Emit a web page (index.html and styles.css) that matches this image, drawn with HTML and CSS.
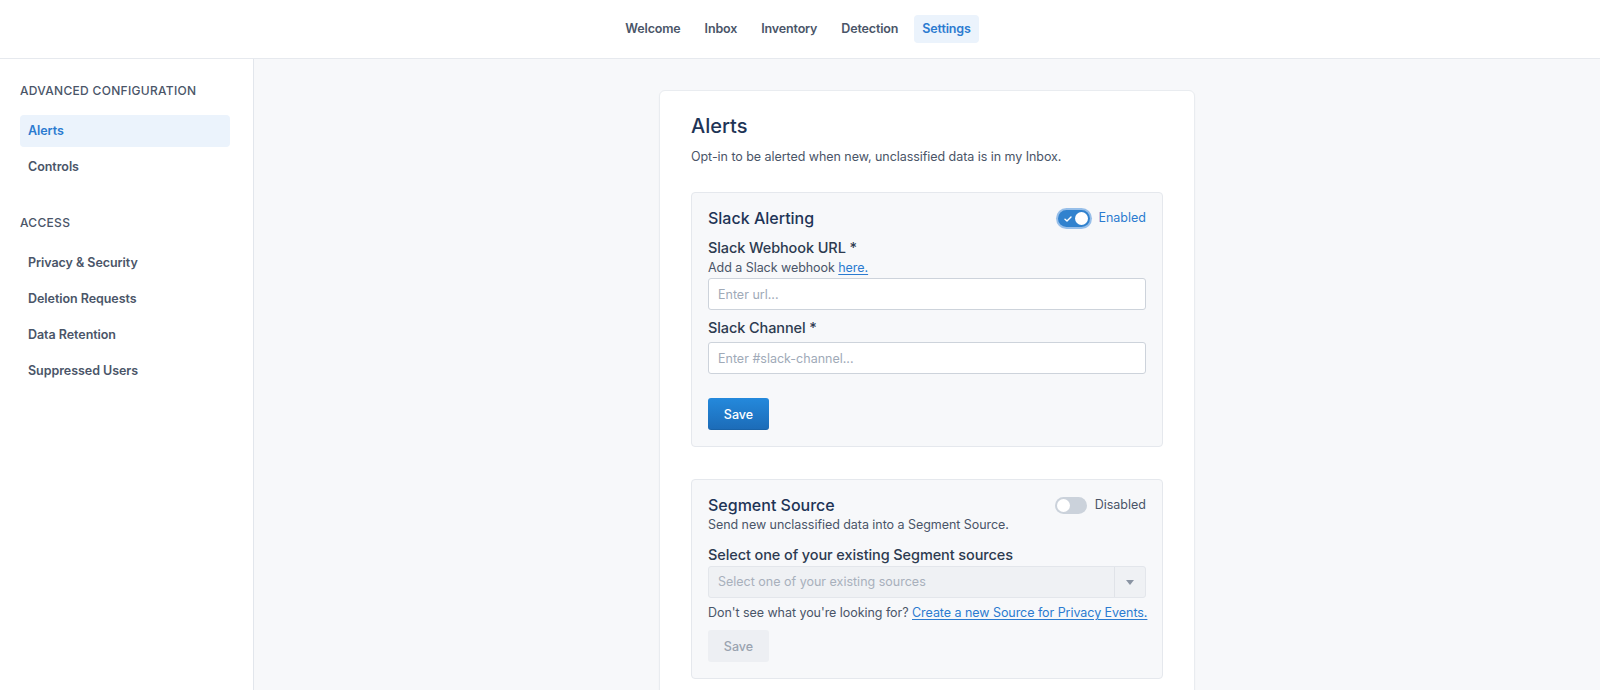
FILE: index.html
```html
<!DOCTYPE html>
<html lang="en">
<head>
<meta charset="utf-8">
<title>Settings - Alerts</title>
<link rel="stylesheet" href="styles.css">
</head>
<body>
<header class="topbar">
  <nav class="topnav">
    <a class="topnav-item">Welcome</a>
    <a class="topnav-item">Inbox</a>
    <a class="topnav-item">Inventory</a>
    <a class="topnav-item">Detection</a>
    <a class="topnav-item is-active">Settings</a>
  </nav>
</header>
<div class="layout">
  <aside class="sidebar">
    <div class="side-heading">Advanced Configuration</div>
    <a class="side-item is-active">Alerts</a>
    <a class="side-item">Controls</a>
    <div class="side-heading side-heading--gap">Access</div>
    <a class="side-item">Privacy &amp; Security</a>
    <a class="side-item">Deletion Requests</a>
    <a class="side-item">Data Retention</a>
    <a class="side-item">Suppressed Users</a>
  </aside>
  <main class="main">
    <section class="card">
      <h1 class="card-title">Alerts</h1>
      <p class="card-desc">Opt-in to be alerted when new, unclassified data is in my Inbox.</p>

      <div class="panel">
        <div class="panel-head">
          <h2 class="panel-title">Slack Alerting</h2>
          <div class="switch-wrap">
            <span class="switch is-on">
              <svg class="switch-check" width="8" height="6" viewBox="0 0 8 6"><path d="M1 3.2 L3 5 L7 1" fill="none" stroke="#fff" stroke-width="1.4" stroke-linecap="round" stroke-linejoin="round"/></svg>
              <span class="switch-knob"></span>
            </span>
            <span class="switch-label is-on">Enabled</span>
          </div>
        </div>
        <label class="field-label field-label--first">Slack Webhook URL *</label>
        <div class="field-help">Add a Slack webhook <a class="link">here.</a></div>
        <input class="input input--help" type="text" placeholder="Enter url...">
        <label class="field-label field-label--next">Slack Channel *</label>
        <input class="input" type="text" placeholder="Enter #slack-channel...">
        <button class="btn btn-primary">Save</button>
      </div>

      <div class="panel panel--second">
        <div class="panel-head">
          <h2 class="panel-title">Segment Source</h2>
          <div class="switch-wrap">
            <span class="switch">
              <span class="switch-knob"></span>
            </span>
            <span class="switch-label">Disabled</span>
          </div>
        </div>
        <div class="panel-desc">Send new unclassified data into a Segment Source.</div>
        <label class="field-label field-label--select">Select one of your existing Segment sources</label>
        <div class="select is-disabled">
          <span class="select-value">Select one of your existing sources</span>
          <span class="select-arrow">
            <svg width="8" height="5" viewBox="0 0 8 5"><path d="M0 0 L8 0 L4 5 Z" fill="#8a94a3"/></svg>
          </span>
        </div>
        <div class="field-help field-help--after">Don't see what you're looking for? <a class="link">Create a new Source for Privacy Events.</a></div>
        <button class="btn btn-disabled">Save</button>
      </div>
    </section>
  </main>
</div>
</body>
</html>
```
FILE: styles.css
```css
* { box-sizing: border-box; }

html, body {
  margin: 0;
  padding: 0;
  height: 100%;
}

body {
  font-family: Inter, "Noto Sans", "Liberation Sans", sans-serif;
  color: #4a5568;
  background: #f7f8fa;
  overflow: hidden;
}

a { cursor: pointer; }

.topbar {
  height: 59px;
  background: #fff;
  border-bottom: 1px solid #e6e9ee;
  display: flex;
  justify-content: center;
  align-items: center;
  padding-right: 4px;
}

.topnav {
  display: flex;
  gap: 8px;
  margin-top: -1px;
}

.topnav-item {
  display: block;
  height: 28px;
  line-height: 28px;
  padding: 0 8px;
  border-radius: 4px;
  font-size: 12.5px;
  font-weight: 600;
  color: #4a5568;
  letter-spacing: -0.15px;
}

.topnav-item.is-active {
  background: #ebf3fc;
  color: #2b7bd0;
}

.layout {
  display: flex;
  height: calc(100% - 59px);
}

.sidebar {
  width: 254px;
  flex: none;
  background: #fff;
  border-right: 1px solid #e2e6ec;
  padding: 24px 23px 0 20px;
  display: flex;
  flex-direction: column;
  gap: 4px;
}

.side-heading {
  font-size: 12px;
  line-height: 16px;
  font-weight: 500;
  letter-spacing: 0.3px;
  text-transform: uppercase;
  color: #4a5568;
  margin-bottom: 12px;
}

.side-heading--gap {
  margin-top: 28px;
}

.side-item {
  display: block;
  height: 32px;
  line-height: 32px;
  padding: 0 8px;
  border-radius: 4px;
  font-size: 12.5px;
  font-weight: 600;
  letter-spacing: -0.05px;
  color: #4a5568;
}

.side-item.is-active {
  background: #ebf3fc;
  color: #2b7bd0;
}

.main {
  flex: 1;
  display: flex;
  justify-content: center;
  padding-top: 31px;
  min-width: 0;
}

.card {
  width: 536px;
  background: #fff;
  border: 1px solid #e9ecf0;
  border-radius: 6px;
  padding: 21px 31px 40px;
  align-self: flex-start;
  box-shadow: 0 1px 2px rgba(20, 30, 50, 0.03);
}

.card-title {
  margin: 0 0 7px;
  font-size: 20px;
  line-height: 28px;
  font-weight: 500;
  color: #1e3456;
}

.card-desc {
  margin: 0 0 25px;
  font-size: 12.5px;
  line-height: 20px;
  letter-spacing: -0.05px;
  color: #4a5568;
}

.panel {
  background: #f7f8fa;
  border: 1px solid #e5e8ed;
  border-radius: 4px;
  padding: 14px 16px 16px;
  display: flex;
  flex-direction: column;
  align-items: stretch;
}

.panel--second {
  margin-top: 32px;
}

.panel-head {
  display: flex;
  justify-content: space-between;
  align-items: center;
  height: 22px;
}

.panel-title {
  margin: 0;
  font-size: 16px;
  line-height: 22px;
  font-weight: 500;
  color: #1e3456;
}

.switch-wrap {
  display: flex;
  align-items: center;
  gap: 8px;
}

.switch {
  position: relative;
  width: 32px;
  height: 17px;
  border-radius: 9px;
  background: #cbd2db;
  display: block;
}

.switch.is-on {
  background: #3182ce;
  box-shadow: 0 0 0 2px rgba(100, 160, 225, 0.65);
}

.switch-knob {
  position: absolute;
  top: 2px;
  left: 2px;
  width: 13px;
  height: 13px;
  border-radius: 50%;
  background: #fff;
}

.switch.is-on .switch-knob {
  left: 17px;
}

.switch-check {
  position: absolute;
  left: 6px;
  top: 6px;
}

.switch-label {
  font-size: 12.5px;
  line-height: 18px;
  color: #4a5568;
}

.switch-label.is-on {
  color: #2b7bd0;
}

.field-label {
  display: block;
  font-size: 14.5px;
  line-height: 22px;
  font-weight: 500;
  letter-spacing: -0.1px;
  color: #2d3b50;
}

.field-label--first { margin-top: 8px; }
.field-label--next { margin-top: 7px; margin-bottom: 3px; }
.field-label--select { margin-top: 10px; margin-bottom: 0; }

.field-help {
  font-size: 12.5px;
  line-height: 18px;
  letter-spacing: -0.05px;
  color: #4a5568;
  margin-bottom: 1px;
  white-space: nowrap;
}

.field-help--after {
  margin-top: 6px;
  margin-bottom: 8px;
}

.link {
  color: #2b7bd0;
  text-decoration: underline;
  text-underline-offset: 2px;
}

.input {
  display: block;
  width: 100%;
  height: 32px;
  border: 1px solid #cdd3db;
  border-radius: 3px;
  background: #fff;
  padding: 0 9px;
  font-family: inherit;
  font-size: 12.5px;
  color: #2d3748;
  outline: none;
}

.input::placeholder { color: #a0aab8; }

.btn {
  align-self: flex-start;
  margin-top: 24px;
  width: 61px;
  height: 32px;
  border-radius: 3px;
  border: none;
  font-family: inherit;
  font-size: 12.5px;
  font-weight: 500;
  padding: 0;
}

.btn-primary {
  background: linear-gradient(#2489dc, #1c6bb7);
  color: #fff;
  box-shadow: inset 0 -1px 0 rgba(0,0,0,0.08);
}

.btn-disabled {
  margin-top: 0;
  background: #edeff3;
  color: #9aa3b0;
}

.panel-desc {
  font-size: 12.5px;
  line-height: 18px;
  letter-spacing: -0.05px;
  color: #4a5568;
}

.select {
  display: flex;
  height: 32px;
  border: 1px solid #e3e6eb;
  border-radius: 3px;
  background: #eff1f4;
}

.select-value {
  flex: 1;
  padding: 0 9px;
  line-height: 30px;
  font-size: 12.5px;
  color: #a8b0bc;
}

.select-arrow {
  width: 31px;
  border-left: 1px solid #e0e3e8;
  display: flex;
  align-items: center;
  justify-content: center;
}
```
